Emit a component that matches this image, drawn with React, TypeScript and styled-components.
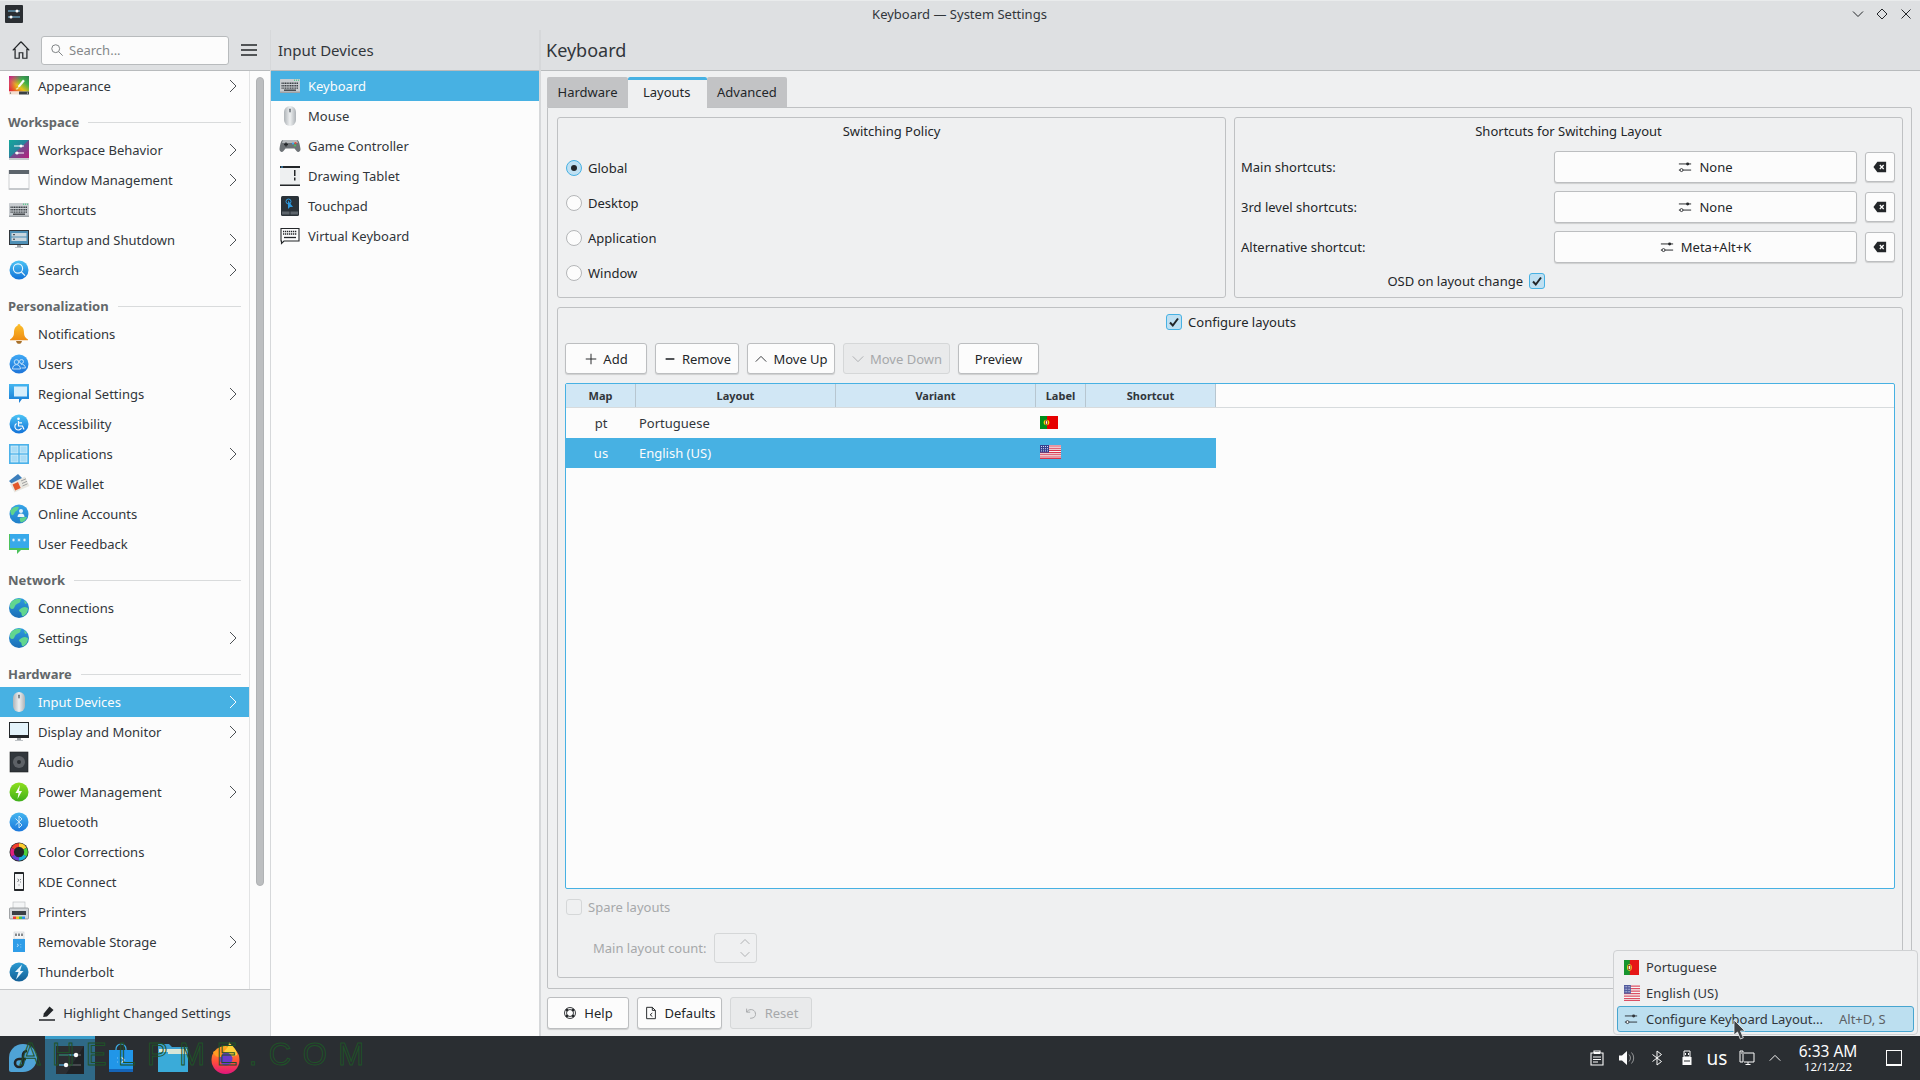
import React from "react";
import styled, { createGlobalStyle } from "styled-components";

const GlobalStyle = createGlobalStyle`
    html, body {
        margin: 0;
        padding: 0;
        background: #eff0f1;
    }
    body {
        font-family: "Noto Sans", "Open Sans", sans-serif;
        font-size: 13px;
        color: #232629;
    }
    * {
        box-sizing: border-box;
    }
`;

/* ---------- icons ---------- */

const Ico = ({ s = 22, children }: { s?: number; children: React.ReactNode }) => (
    <IconSvg width={s} height={s} viewBox="0 0 22 22">
        {children}
    </IconSvg>
);

const IconSvg = styled.svg`
    flex: none;
    display: block;
`;

const Appearance = () => (
    <Ico>
        <defs>
            <linearGradient id="app-g" x1="0" y1="1" x2="1" y2="0">
                <stop offset="0" stopColor="#e8102f" />
                <stop offset="0.4" stopColor="#e8c218" />
                <stop offset="0.7" stopColor="#3fb04a" />
                <stop offset="1" stopColor="#2f7f50" />
            </linearGradient>
            <linearGradient id="app-m" x1="0" y1="0" x2="1" y2="0.6">
                <stop offset="0" stopColor="#c8148c" stopOpacity="1" />
                <stop offset="0.55" stopColor="#d4148c" stopOpacity="0" />
            </linearGradient>
        </defs>
        <rect x="1" y="1" width="20" height="15.500" fill="url(#app-g)" />
        <rect x="1" y="1" width="20" height="15.500" fill="url(#app-m)" />
        <rect x="1" y="16.500" width="10" height="3" fill="#f4dfcf" />
        <rect x="11" y="16.500" width="10" height="3" fill="#3b4045" />
        <circle cx="2.500" cy="18" r="0.600" fill="#31363b" />
        <circle cx="19.500" cy="18" r="0.600" fill="#fcfcfc" />
        <path d="M15 4.500l1.800 1.400-4.800 5.800-2.200 1 .7-2.400z" fill="#fcfcfc" />
        <path d="M7.500 14l2.200-1.600 1 1-1.800 1.400z" fill="#f2f2a0" />
    </Ico>
);

const WorkspaceBehavior = () => (
    <Ico>
        <defs>
            <linearGradient id="wb-g" x1="0" y1="0" x2="1" y2="1">
                <stop offset="0" stopColor="#14a89a" />
                <stop offset="0.55" stopColor="#2a7f9e" />
                <stop offset="1" stopColor="#c21f7a" />
            </linearGradient>
        </defs>
        <rect x="1" y="1" width="20" height="18" fill="url(#wb-g)" />
        <path d="M1 19l20-18v18z" fill="#b02080" opacity="0.55" />
        <rect x="1" y="19" width="20" height="2" fill="#c6c9cc" />
        <path d="M6 7h10M7 14h9" stroke="#fcfcfc" strokeWidth="1" />
        <circle cx="13" cy="7" r="1.5" fill="#fcfcfc" />
        <circle cx="9" cy="14" r="1.5" fill="#fcfcfc" />
    </Ico>
);

const WindowManagement = () => (
    <Ico>
        <rect x="1" y="1.5" width="20" height="19" fill="#fcfcfc" stroke="#c3c6c9" strokeWidth="0.8" />
        <rect x="1" y="1" width="20" height="4" fill="#5d656c" />
        <rect x="1" y="19" width="20" height="2" fill="#c6c9cc" />
    </Ico>
);

const KeyboardColor = () => (
    <Ico>
        <rect x="1" y="4" width="20" height="14" rx="0.5" fill="#c8ccd0" />
        <rect x="1" y="16.5" width="20" height="1.5" fill="#9da2a6" />
        <path d="M2.5 8.3h17M2.5 10.7h17M2.5 13.1h17" stroke="#3b4045" strokeWidth="1.4" strokeDasharray="1.2 .5" />
        <path d="M5 15.2h12" stroke="#3b4045" strokeWidth="1.4" />
        <path d="M15 5.2h5" stroke="#2ecc71" strokeWidth="1" strokeDasharray="1 1" />
    </Ico>
);

const Startup = () => (
    <Ico>
        <rect x="1" y="1" width="20" height="15" fill="#31363b" />
        <rect x="2" y="2" width="18" height="13" fill="#4e8fb5" />
        <rect x="3.5" y="4" width="15" height="3.5" fill="#c9d6de" />
        <rect x="3.5" y="8.5" width="15" height="3.5" fill="#c9d6de" />
        <path d="M5 5.7h2M5 10.2h2" stroke="#31363b" strokeWidth="1" />
        <rect x="9" y="16" width="4" height="2" fill="#9da2a6" />
        <rect x="7" y="18" width="8" height="1" fill="#bfc3c6" />
    </Ico>
);

const BlueDisc = ({ id, from = "#4cc4f5", to = "#1272d8" }: { id: string; from?: string; to?: string }) => (
    <>
        <defs>
            <linearGradient id={id} x1="0" y1="0" x2="0" y2="1">
                <stop offset="0" stopColor={from} />
                <stop offset="1" stopColor={to} />
            </linearGradient>
        </defs>
        <circle cx="11" cy="11" r="9.5" fill={`url(#${id})`} />
    </>
);

const SearchColor = () => (
    <Ico>
        <BlueDisc id="sr-g" />
        <circle cx="10" cy="9.5" r="4.6" fill="none" stroke="#eaf6fd" strokeWidth="1.1" />
        <path d="M13.4 13l3.6 3.6" stroke="#eaf6fd" strokeWidth="1.2" />
    </Ico>
);

const Bell = () => (
    <Ico>
        <defs>
            <linearGradient id="bl-g" x1="0" y1="0" x2="0" y2="1">
                <stop offset="0" stopColor="#fbc02d" />
                <stop offset="1" stopColor="#ef8c13" />
            </linearGradient>
        </defs>
        <path d="M11 1c1 0 1.4.8 1.5 1.8C15.5 4 16 7 16 10c0 3 1.4 5 4 6.5v.8H2v-.8C4.600 15 6 13 6 10c0-3 .5-6 3.500-7.200C9.600 1.800 10 1 11 1z" fill="url(#bl-g)" />
        <path d="M8 18h6c-.5 2-1.500 2.800-3 2.800S8.500 20 8 18z" fill="#a8702a" />
    </Ico>
);

const Users = () => (
    <Ico>
        <BlueDisc id="us-g" from="#3fa9f5" to="#1d74d8" />
        <circle cx="8.500" cy="9" r="2.300" fill="none" stroke="#cfe8fb" strokeWidth="0.9" />
        <circle cx="13.500" cy="8.500" r="2" fill="none" stroke="#cfe8fb" strokeWidth="0.9" />
        <path d="M4.500 16c.3-3 1.800-4.300 4-4.300s3.700 1.300 4 4.300zM13 11.300c2.500-.3 4 1 4.500 3.700h-4" fill="none" stroke="#cfe8fb" strokeWidth="0.9" />
    </Ico>
);

const Regional = () => (
    <Ico>
        <defs>
            <linearGradient id="rg-g" x1="0" y1="0" x2="0" y2="1">
                <stop offset="0" stopColor="#45b6f0" />
                <stop offset="1" stopColor="#1478d4" />
            </linearGradient>
        </defs>
        <path d="M1 1h20v15h-7l-3 4v-4H1z" fill="url(#rg-g)" />
        <rect x="6" y="3.500" width="13" height="10" fill="#d8eefb" />
    </Ico>
);

const Accessibility = () => (
    <Ico>
        <BlueDisc id="ac-g" />
        <circle cx="10.500" cy="5.800" r="1.300" fill="#fcfcfc" />
        <path d="M10.500 8v5h4l1.500 3.500M10 9.800H14" fill="none" stroke="#fcfcfc" strokeWidth="1.200" />
        <path d="M8.500 10.500a3.500 3.500 0 1 0 5 4.500" fill="none" stroke="#fcfcfc" strokeWidth="1.100" />
    </Ico>
);

const Applications = () => (
    <Ico>
        <rect x="1" y="1" width="20" height="20" fill="#4cb2ea" />
        <rect x="3" y="3" width="7" height="7" fill="#a9dcf6" stroke="#e3f3fc" strokeWidth="0.6" />
        <rect x="12" y="3" width="7" height="7" fill="#a9dcf6" stroke="#e3f3fc" strokeWidth="0.6" />
        <rect x="3" y="12" width="7" height="7" fill="#a9dcf6" stroke="#e3f3fc" strokeWidth="0.6" />
        <rect x="12" y="12" width="7" height="7" fill="#a9dcf6" stroke="#e3f3fc" strokeWidth="0.6" />
    </Ico>
);

const Wallet = () => (
    <Ico>
        <path d="M1 8l9-7 5 5-9 7z" fill="#3c7fbc" />
        <path d="M2 11l15-7.500 4.500 9.500-15 6.500z" fill="#e9e7e0" />
        <rect x="5.500" y="10" width="6" height="6.500" fill="#e2592b" transform="rotate(-24 8.500 13)" />
        <path d="M13 8l5-2.200M14 10.500l5-2.200M14.500 13l5-2.200" stroke="#8a8d8f" strokeWidth="0.8" />
    </Ico>
);

const Online = () => (
    <Ico>
        <BlueDisc id="on-g" from="#37a5e8" to="#1f7fc9" />
        <path d="M3 7c2-3 5-4 8-3-1 2-1 3-3 4s-1 3-3 4-2-2-3-5zM12 15c2-1 5-1 7-1-1 3-3 5-6 5.500-1-1-1.500-3-1-4.500z" fill="#5fd38d" />
        <circle cx="13" cy="8" r="2" fill="#e8f5fc" />
        <path d="M9.500 14c0-2.500 1.500-3.500 3.500-3.500s3.500 1 3.500 3.500z" fill="#e8f5fc" />
    </Ico>
);

const Feedback = () => (
    <Ico>
        <path d="M1 1h20v16h-8l-4 4v-4H1z" fill="#4cc25c" />
        <rect x="2" y="1" width="19" height="14" fill="#38a9ea" />
        <path d="M4 7h3M5.500 5.500v3M9.500 7h3M11 5.500v3M15 7h3M16.500 5.500v3M4.500 5.800l2 2.400M6.500 5.800l-2 2.400M10 5.800l2 2.400M12 5.800l-2 2.400M15.500 5.800l2 2.400M17.500 5.800l-2 2.400" stroke="#fcfcfc" strokeWidth="0.6" />
    </Ico>
);

const Globe = () => (
    <Ico>
        <defs>
            <linearGradient id="gl-g" x1="0" y1="0" x2="0" y2="1">
                <stop offset="0" stopColor="#2e9ae0" />
                <stop offset="1" stopColor="#1a6fb5" />
            </linearGradient>
        </defs>
        <circle cx="11" cy="11" r="10" fill="url(#gl-g)" />
        <path d="M3 5c3-3 7-4 10-3-1 2 0 3-2 4S8 7 7 9s-1 3-3 3-3-3-1-7zM11 13c2-2 4-3 6-3l3 1c0 4-2 7-5 8.500-2-1-1-3-2-4s-2-1-2-2.500zM16 3l3 3-2 1z" fill="#61d68f" />
    </Ico>
);

const Mouse = () => (
    <Ico>
        <defs>
            <linearGradient id="ms-g" x1="0" y1="0" x2="1" y2="0">
                <stop offset="0" stopColor="#aeb3b7" />
                <stop offset="0.5" stopColor="#eef0f1" />
                <stop offset="1" stopColor="#aeb3b7" />
            </linearGradient>
        </defs>
        <rect x="5" y="1" width="12" height="20" rx="6" fill="url(#ms-g)" />
        <rect x="10.300" y="3.500" width="1.400" height="4" rx="0.700" fill="#5d656c" />
    </Ico>
);

const Display = () => (
    <Ico>
        <rect x="1" y="1" width="20" height="16" fill="#232629" />
        <rect x="2" y="2" width="18" height="12" fill="#e4f3fb" />
        <rect x="9" y="17" width="4" height="2" fill="#9da2a6" />
        <rect x="7" y="19" width="8" height="1" fill="#bfc3c6" />
    </Ico>
);

const Audio = () => (
    <Ico>
        <rect x="2" y="1" width="18" height="20" fill="#31363b" />
        <rect x="2" y="1" width="18" height="20" fill="none" stroke="#1b1e20" strokeWidth="0.6" />
        <circle cx="11" cy="11" r="6" fill="#5d6166" />
        <circle cx="11" cy="11" r="2" fill="#2a2e32" />
    </Ico>
);

const Power = () => (
    <Ico>
        <BlueDisc id="pw-g" from="#8fe01e" to="#3faf1b" />
        <path d="M12 4l-4.500 8h3l-1 6 4.500-8h-3z" fill="#fcfcfc" />
    </Ico>
);

const BluetoothColor = () => (
    <Ico>
        <BlueDisc id="bt-g" from="#45b6f0" to="#1b78dc" />
        <path d="M7.500 7.500l6.500 6.500-3 3V5l3 3-6.500 6" fill="none" stroke="#d8eefb" strokeWidth="0.9" />
    </Ico>
);

const ColorCorrections = () => (
    <Ico>
        <circle cx="11" cy="11" r="9.500" fill="#232629" />
        <g fill="none" strokeWidth="3.500">
            <path d="M11 4a7 7 0 0 1 6 3.500" stroke="#ffce2e" />
            <path d="M17 7.500a7 7 0 0 1 0 7" stroke="#4cd137" />
            <path d="M17 14.500a7 7 0 0 1-6 3.500" stroke="#1ab0d8" />
            <path d="M11 18a7 7 0 0 1-6-3.500" stroke="#6a3fd4" />
            <path d="M5 14.500a7 7 0 0 1 0-7" stroke="#e0207f" />
            <path d="M5 7.500a7 7 0 0 1 6-3.500" stroke="#f0402c" />
        </g>
        <circle cx="11" cy="11" r="1.500" fill="#232629" />
    </Ico>
);

const KdeConnect = () => (
    <Ico>
        <rect x="6" y="1" width="10" height="19" rx="0.800" fill="#232629" />
        <rect x="7" y="3" width="8" height="15" fill="#f4f5f6" />
        <path d="M9.500 8l1.500 1-1.500 2M12 8.500h1M12 11h1M11 13.500v1" stroke="#6e7377" strokeWidth="0.900" fill="none" />
    </Ico>
);

const Printer = () => (
    <Ico>
        <rect x="5" y="1" width="12" height="8" fill="#f4f5f6" stroke="#b5b9bc" strokeWidth="0.600" />
        <rect x="1.500" y="7" width="19" height="11" rx="0.800" fill="#d3d6d9" stroke="#6e7377" strokeWidth="0.600" />
        <rect x="4" y="10" width="14" height="4" fill="#3b4045" />
        <rect x="5" y="15.500" width="3" height="2.500" fill="#e93a3a" />
        <rect x="8" y="15.500" width="3" height="2.500" fill="#f2c31c" />
        <rect x="11" y="15.500" width="3" height="2.500" fill="#3fc04a" />
        <rect x="14" y="15.500" width="3" height="2.500" fill="#2a8fe8" />
    </Ico>
);

const Usb = () => (
    <Ico>
        <rect x="6" y="1" width="10" height="7" fill="#f4f5f6" stroke="#c3c6c9" strokeWidth="0.500" />
        <path d="M8 2.500v2.500M11 2.500v2.500M14 2.500v2.500" stroke="#3b4045" strokeWidth="1.200" />
        <rect x="5" y="8" width="12" height="13" fill="#2f9de8" />
        <path d="M9 13l1.500 1-1.500 2M12.500 13.500h.7M12.500 16h.7" stroke="#cfe8fb" strokeWidth="0.800" fill="none" />
    </Ico>
);

const ThunderboltColor = () => (
    <Ico>
        <BlueDisc id="tb-g" from="#2b9ad2" to="#125f96" />
        <path d="M14 3.500L7 11h3.500L8 18.500l7.500-8.500H12z" fill="#eaf6fd" />
    </Ico>
);

const Gamepad = () => (
    <Ico>
        <path d="M4 5h14c2 0 3 5 3.500 9 .2 2.500-2.500 4-4 2l-2-2.500h-9l-2 2.500c-1.500 2-4.200.5-4-2C1 10 2 5 4 5z" fill="#6e7377" />
        <path d="M4 5h14l1 3H3z" fill="#b5b9bc" />
        <path d="M5 9.500h4M7 7.500v4" stroke="#232629" strokeWidth="1.400" />
        <circle cx="14" cy="8.500" r="1.100" fill="#3fa9f5" />
        <circle cx="16.500" cy="8" r="1.100" fill="#e74c3c" />
        <circle cx="16" cy="10.500" r="1.100" fill="#4cc25c" />
    </Ico>
);

const Tablet = () => (
    <Ico>
        <rect x="1" y="2" width="20" height="18" fill="#eef0f1" />
        <rect x="1" y="1" width="20" height="2" fill="#232629" />
        <rect x="1" y="19.500" width="20" height="1.500" fill="#232629" />
        <rect x="2" y="1.500" width="2" height="1" fill="#3fa9f5" />
        <rect x="15" y="5" width="1.500" height="6" fill="#232629" />
        <rect x="15" y="12.500" width="1.500" height="3" fill="#232629" />
    </Ico>
);

const Touchpad = () => (
    <Ico>
        <rect x="2" y="1" width="18" height="20" rx="1.500" fill="#2a3238" />
        <rect x="3" y="16.500" width="7.500" height="3" fill="#5d656c" />
        <rect x="11.500" y="16.500" width="7.500" height="3" fill="#5d656c" />
        <circle cx="9.500" cy="6.500" r="2.500" fill="none" stroke="#2e9ae0" strokeWidth="1" />
        <path d="M9 5.500v8.500l2-2h3z" fill="#2e9ae0" />
    </Ico>
);

const VirtualKeyboard = () => (
    <Ico>
        <path d="M2 3.500h18v12.500H5l-2.500 2.500V16H2z" fill="#fcfcfc" stroke="#232629" strokeWidth="1.100" />
        <path d="M4 6.500h14M4 9h14" stroke="#232629" strokeWidth="1.300" strokeDasharray="1.300 .7" />
        <path d="M5 12.500h12" stroke="#232629" strokeWidth="1.300" />
    </Ico>
);

const navIcons: Record<string, React.FC> = {
    Appearance,
    "Workspace Behavior": WorkspaceBehavior,
    "Window Management": WindowManagement,
    Shortcuts: KeyboardColor,
    "Startup and Shutdown": Startup,
    Search: SearchColor,
    Notifications: Bell,
    Users,
    "Regional Settings": Regional,
    Accessibility,
    Applications,
    "KDE Wallet": Wallet,
    "Online Accounts": Online,
    "User Feedback": Feedback,
    Connections: Globe,
    Settings: Globe,
    "Input Devices": Mouse,
    "Display and Monitor": Display,
    Audio,
    "Power Management": Power,
    Bluetooth: BluetoothColor,
    "Color Corrections": ColorCorrections,
    "KDE Connect": KdeConnect,
    Printers: Printer,
    "Removable Storage": Usb,
    Thunderbolt: ThunderboltColor,
};

const Mono = ({ s = 16, children, c = "#232629" }: { s?: number; children: React.ReactNode; c?: string }) => (
    <IconSvg width={s} height={s} viewBox="0 0 16 16" fill="none" stroke={c} color={c}>
        {children}
    </IconSvg>
);

const SlidersIcon = ({ c = "#232629", s = 14 }: { c?: string; s?: number }) => (
    <Mono c={c} s={s}>
        <path d="M1 4.500h14M1 11.500h14" strokeWidth="1.100" />
        <circle cx="11" cy="4.500" r="1.700" fill={c} stroke="none" />
        <circle cx="4" cy="11.500" r="1.700" fill="#fcfcfc" strokeWidth="1" />
    </Mono>
);

const ClearIcon = () => (
    <Mono s={14}>
        <path d="M5 2h10v12H5L0.500 8z" fill="#232629" stroke="none" />
        <path d="M7.800 5.800l4.400 4.400M12.200 5.800l-4.400 4.400" stroke="#fcfcfc" strokeWidth="1.500" />
    </Mono>
);

const CheckMark = () => (
    <IconSvg width={12} height={12} viewBox="0 0 12 12">
        <path d="M2 6.500l2.800 3L10 2.500" fill="none" stroke="#232629" strokeWidth="2" />
    </IconSvg>
);

const PtFlag = ({ w, h, soft }: { w: number; h: number; soft?: boolean }) => (
    <IconSvg width={w} height={h} viewBox="0 0 18 13" preserveAspectRatio="none" opacity={soft ? 0.9 : 1}>
        <rect width="18" height="13" fill="#e60000" />
        <rect width="7" height="13" fill="#008c1a" />
        <circle cx="6.500" cy="6.500" r="2.800" fill="#f5d90a" />
        <rect x="5.500" y="4.800" width="2" height="3.400" fill="#fcfcfc" stroke="#7a1a10" strokeWidth="0.700" />
    </IconSvg>
);

const UsFlag = ({ w, h, soft }: { w: number; h: number; soft?: boolean }) => (
    <IconSvg width={w} height={h} viewBox="0 0 21 14" preserveAspectRatio="none" opacity={soft ? 0.85 : 1}>
        <rect width="21" height="14" fill="#f8f8f8" />
        <path d="M0 1h21M0 3.200h21M0 5.400h21M0 7.600h21M0 9.800h21M0 12h21M0 13.600h21" stroke="#d8344c" strokeWidth="1.100" />
        <rect width="9" height="7.600" fill="#35408f" />
        <path d="M1 1.500h7M1 3.700h7M1 5.900h7" stroke="#d4d8ee" strokeWidth="1" strokeDasharray="1 1" />
    </IconSvg>
);

/* ---------- window frame ---------- */

const Screen = styled.div`
    position: relative;
    width: 1920px;
    height: 1080px;
    overflow: hidden;
    display: flex;
    flex-direction: column;
`;

const Win = styled.div`
    flex: 1;
    min-height: 0;
    display: flex;
    flex-direction: column;
    background: #eff0f1;
`;

const TitleBar = styled.div`
    height: 30px;
    flex: none;
    display: grid;
    grid-template-columns: 1fr auto 1fr;
    align-items: center;
    padding: 0 6px 3px 5px;
    background: #dee0e2;
    border-top: 1px solid #e9ebec;
    font-size: 13px;
    color: #31363b;
`;

const TitleText = styled.div`
    text-align: center;
`;

const WinButtons = styled.div`
    justify-self: end;
    display: flex;
    gap: 8px;
`;

const Columns = styled.div`
    flex: 1;
    min-height: 0;
    display: flex;
`;

const Column = styled.div<{ $width: number; $line?: number }>`
    flex: none;
    width: ${({ $width }) => $width}px;
    display: flex;
    flex-direction: column;
    background: #fcfcfc;
    border-right: ${({ $line }) => $line ?? 1}px solid #d6d8da;
`;

const Header = styled.div`
    flex: none;
    height: 41px;
    display: flex;
    align-items: center;
    background: #dee0e2;
    border-bottom: 1px solid #b8bbbd;
`;

const SideHeader = styled(Header)`
    padding-left: 10px;
    gap: 9px;
`;

const SearchBox = styled.div`
    width: 188px;
    height: 29px;
    display: flex;
    align-items: center;
    gap: 5px;
    padding-left: 8px;
    background: #fcfcfc;
    border: 1px solid #b8bbbd;
    border-radius: 3px;
    color: #85888a;
`;

const MenuButton = styled.div`
    margin-left: 3px;
    display: flex;
`;

const HeaderTitle = styled.div<{ $size: number }>`
    padding-left: ${({ $size }) => ($size > 16 ? 5 : 7)}px;
    font-size: ${({ $size }) => $size}px;
    color: #31363b;
`;

/* ---------- sidebar ---------- */

const SideBody = styled.div`
    flex: 1;
    min-height: 0;
    display: flex;
`;

const NavList = styled.div`
    width: 250px;
    flex: none;
    border-right: 1px solid #e2e3e4;
`;

const ScrollTrack = styled.div`
    flex: 1;
    padding: 6px 6px 0;
`;

const ScrollThumb = styled.div`
    width: 8px;
    height: 809px;
    background: #bcbec0;
    border: 1px solid #b0b2b4;
    border-radius: 4px;
`;

const SectionTitle = styled.div`
    height: 34px;
    padding: 8px 8px 0 8px;
    display: flex;
    align-items: center;
    gap: 9px;
    font-weight: 700;
    color: #63676a;
    &::after {
        content: "";
        flex: 1;
        height: 1px;
        background: #d9dbdc;
    }
`;

const Row = styled.div<{ $active?: boolean }>`
    height: 30px;
    display: flex;
    align-items: center;
    gap: 8px;
    padding: 0 12px 0 8px;
    background: ${({ $active }) => ($active ? "#47b1e3" : "transparent")};
    color: ${({ $active }) => ($active ? "#fcfcfc" : "#31363b")};
`;

const RowLabel = styled.span`
    flex: 1;
`;

const SideFooter = styled.div`
    flex: none;
    height: 47px;
    display: flex;
    align-items: center;
    justify-content: center;
    gap: 8px;
    background: #eff0f1;
    border-top: 1px solid #c6c8ca;
    color: #31363b;
`;

const SubRow = styled(Row)`
    gap: 7px;
`;

/* ---------- main column ---------- */

const Main = styled.div`
    flex: 1;
    min-width: 0;
    display: flex;
    flex-direction: column;
`;

const MainBody = styled.div`
    flex: 1;
    min-height: 0;
    display: flex;
    flex-direction: column;
    padding: 6px 8px 0 6px;
`;

const TabBar = styled.div`
    flex: none;
    height: 30px;
    display: flex;
    position: relative;
    z-index: 1;
`;

const Tab = styled.div<{ $active?: boolean }>`
    display: flex;
    align-items: center;
    margin-bottom: ${({ $active }) => ($active ? -1 : 0)}px;
    padding: ${({ $active }) => ($active ? "0 16px 5px 15px" : "0 10.500px")};
    background: ${({ $active }) => ($active ? "#eff0f1" : "#c2c3c5")};
    border-top: ${({ $active }) => ($active ? "3px solid #47b1e3" : "none")};
    border-radius: 2px 2px 0 0;
`;

const Pane = styled.div`
    flex: 1;
    min-height: 0;
    display: flex;
    flex-direction: column;
    gap: 9px;
    padding: 9px 8px 10px 9px;
    border: 1px solid #bfc1c3;
    border-radius: 0 2px 2px 2px;
`;

const TopGroups = styled.div`
    flex: none;
    display: grid;
    grid-template-columns: 1fr 1fr;
    gap: 8px;
    height: 181px;
`;

const Group = styled.div`
    border: 1px solid #bfc1c3;
    border-radius: 3px;
    padding-top: 3px;
    display: flex;
    flex-direction: column;
    min-height: 0;
`;

const GroupTitle = styled.div`
    height: 20px;
    line-height: 20px;
    text-align: center;
`;

const RadioList = styled.div`
    margin-top: 9px;
    padding-left: 8px;
`;

const RadioRow = styled.div`
    height: 35px;
    display: flex;
    align-items: center;
    gap: 6px;
`;

const Radio = styled.span<{ $on?: boolean }>`
    width: 16px;
    height: 16px;
    border-radius: 50%;
    display: flex;
    align-items: center;
    justify-content: center;
    border: 1px solid ${({ $on }) => ($on ? "#47b1e3" : "#b4b6b8")};
    background: ${({ $on }) => ($on ? "#bfe0f2" : "#fcfcfc")};
    &::after {
        content: "";
        display: ${({ $on }) => ($on ? "block" : "none")};
        width: 6px;
        height: 6px;
        border-radius: 50%;
        background: #232629;
    }
`;

const ShortcutGrid = styled.div`
    margin-top: 10px;
    padding: 0 7px 0 6px;
    display: grid;
    grid-template-columns: 1fr 303px 30px;
    grid-auto-rows: 32px;
    gap: 8px;
    align-items: center;
`;

const Button = styled.div<{ $disabled?: boolean }>`
    height: 32px;
    display: flex;
    align-items: center;
    justify-content: center;
    gap: 7px;
    padding: 0 12px;
    background: ${({ $disabled }) => ($disabled ? "#e9eaeb" : "#fcfcfc")};
    color: ${({ $disabled }) => ($disabled ? "#a6a8aa" : "#232629")};
    border: 1px solid ${({ $disabled }) => ($disabled ? "#d5d7d8" : "#bcbec0")};
    border-radius: 3px;
    box-shadow: ${({ $disabled }) => ($disabled ? "none" : "0 1px 1px rgba(0, 0, 0, 0.14)")};
`;

const ClearButton = styled(Button)`
    height: 30px;
    padding: 0;
`;

const OsdRow = styled.div`
    grid-column: 1;
    justify-self: end;
    align-self: start;
    height: 19px;
    margin-right: 1px;
    display: flex;
    align-items: center;
    gap: 6px;
`;

const Checkbox = styled.span<{ $on?: boolean; $disabled?: boolean }>`
    width: 16px;
    height: 16px;
    flex: none;
    display: flex;
    align-items: center;
    justify-content: center;
    border-radius: 3px;
    border: 1px solid ${({ $on, $disabled }) => ($on ? "#47b1e3" : $disabled ? "#d5d7d8" : "#b4b6b8")};
    background: ${({ $on, $disabled }) => ($on ? "#bfe0f2" : $disabled ? "#eff0f1" : "#fcfcfc")};
`;

const LayoutsGroup = styled(Group)`
    flex: 1;
    padding: 4px 7px 14px 7px;
`;

const ConfigureRow = styled.div`
    height: 20px;
    display: flex;
    align-items: center;
    justify-content: center;
    gap: 6px;
    padding-left: 2px;
`;

const ButtonBar = styled.div`
    margin-top: 11px;
    display: flex;
    gap: 8px;
`;

const ToolButton = styled(Button)<{ $width: number }>`
    width: ${({ $width }) => $width}px;
    height: 31px;
    padding: 0;
    gap: 5px;
`;

const Table = styled.div`
    flex: 1;
    min-height: 0;
    margin-top: 9px;
    background: #fcfcfc;
    border: 1px solid #47b1e3;
    border-radius: 2px;
`;

const cols = "70px 200px 200px 50px 130px";

const TableHead = styled.div`
    height: 24px;
    display: grid;
    grid-template-columns: ${cols};
    border-bottom: 1px solid #d7dbdd;
`;

const HeadCell = styled.div`
    display: flex;
    align-items: center;
    justify-content: center;
    background: #d1e7f5;
    border-right: 1px solid #b7c6d0;
    font-size: 11px;
    font-weight: 700;
    color: #31363b;
`;

const TableRow = styled.div<{ $active?: boolean }>`
    width: 650px;
    height: 30px;
    display: grid;
    grid-template-columns: ${cols};
    align-items: center;
    background: ${({ $active }) => ($active ? "#47b1e3" : "transparent")};
    color: ${({ $active }) => ($active ? "#fcfcfc" : "#31363b")};
`;

const MapCell = styled.div`
    text-align: center;
`;

const LayoutCell = styled.div`
    padding-left: 3px;
`;

const FlagCell = styled.div`
    padding-left: 4px;
    display: flex;
    margin-top: -2px;
`;

const SpareRow = styled.div`
    margin-top: 8px;
    margin-left: 1px;
    height: 20px;
    display: flex;
    align-items: center;
    gap: 6px;
    color: #a6a8aa;
`;

const CountRow = styled.div`
    margin-top: 16px;
    margin-left: 28px;
    height: 30px;
    display: flex;
    align-items: center;
    gap: 8px;
    color: #a6a8aa;
`;

const SpinBox = styled.div`
    width: 43px;
    height: 30px;
    padding-right: 6px;
    display: flex;
    flex-direction: column;
    align-items: flex-end;
    justify-content: center;
    gap: 2px;
    border: 1px solid #d5d7d8;
    border-radius: 3px;
`;

const Footer = styled.div`
    flex: none;
    height: 47px;
    padding-top: 8px;
    display: flex;
    gap: 8px;
`;

const FooterButton = styled(Button)<{ $width: number }>`
    width: ${({ $width }) => $width}px;
    padding: 0;
`;

/* ---------- panel ---------- */

const Panel = styled.div`
    position: relative;
    flex: none;
    height: 44px;
    display: flex;
    align-items: center;
    background: #2a2e32;
    color: #fcfcfc;
`;

const Launcher = styled.div`
    width: 45px;
    height: 44px;
    display: flex;
    align-items: center;
    justify-content: center;
`;

const Task = styled.div<{ $active?: boolean; $w?: number }>`
    width: ${({ $w }) => $w ?? 52}px;
    height: 44px;
    display: flex;
    align-items: center;
    justify-content: center;
    background: ${({ $active }) => ($active ? "#2f6987" : "transparent")};
    border-top: ${({ $active }) => ($active ? "3px solid #3b9dc9" : "none")};
`;

const Watermark = styled.div`
    position: absolute;
    left: 20px;
    top: 1px;
    font-family: "Liberation Sans", sans-serif;
    font-size: 31px;
    letter-spacing: 11.5px;
    white-space: nowrap;
    color: transparent;
    -webkit-text-stroke: 1px #1f5228;
    pointer-events: none;
`;

const Tray = styled.div`
    margin-left: auto;
    display: flex;
    align-items: center;
`;

const TraySlot = styled.div<{ $w?: number }>`
    width: ${({ $w }) => $w ?? 30}px;
    display: flex;
    justify-content: center;
`;

const TrayLang = styled(TraySlot)`
    font-size: 19px;
    line-height: 22px;
`;

const Clock = styled.div`
    width: 70px;
    margin-left: 5px;
    display: flex;
    flex-direction: column;
    align-items: center;
    line-height: 14px;
`;

const ClockTime = styled.div`
    font-size: 15.5px;
    line-height: 17px;
`;

const ClockDate = styled.div`
    font-size: 11.5px;
    line-height: 13px;
`;

const ShowDesktop = styled.div`
    width: 16px;
    height: 16px;
    margin: 0 18px 0 23px;
    border: 1px solid #fcfcfc;
    border-bottom-width: 2px;
`;

/* ---------- popup menu ---------- */

const Popup = styled.div`
    position: absolute;
    right: 2px;
    bottom: 45px;
    width: 305px;
    height: 85px;
    padding: 3px 3px;
    background: #eff0f1;
    border: 1px solid #cfd1d3;
    border-radius: 4px;
    display: flex;
    flex-direction: column;
    color: #31363b;
`;

const PopupItem = styled.div<{ $active?: boolean }>`
    height: 26px;
    flex: none;
    display: grid;
    grid-template-columns: 17px auto 1fr;
    align-items: center;
    column-gap: 5px;
    padding-left: 6px;
    border-radius: 3px;
    border: 1px solid ${({ $active }) => ($active ? "#47a5d0" : "transparent")};
    background: ${({ $active }) => ($active ? "#bcdff0" : "transparent")};
`;

const PopupShortcut = styled.span`
    margin-left: 11px;
    color: #5d6165;
`;

const Cursor = styled.svg`
    position: absolute;
    left: 1733px;
    top: 1019px;
`;

const sections: { title?: string; items: [string, boolean?][] }[] = [
    { items: [["Appearance", true]] },
    {
        title: "Workspace",
        items: [
            ["Workspace Behavior", true],
            ["Window Management", true],
            ["Shortcuts"],
            ["Startup and Shutdown", true],
            ["Search", true],
        ],
    },
    {
        title: "Personalization",
        items: [
            ["Notifications"],
            ["Users"],
            ["Regional Settings", true],
            ["Accessibility"],
            ["Applications", true],
            ["KDE Wallet"],
            ["Online Accounts"],
            ["User Feedback"],
        ],
    },
    { title: "Network", items: [["Connections"], ["Settings", true]] },
    {
        title: "Hardware",
        items: [
            ["Input Devices", true],
            ["Display and Monitor", true],
            ["Audio"],
            ["Power Management", true],
            ["Bluetooth"],
            ["Color Corrections"],
            ["KDE Connect"],
            ["Printers"],
            ["Removable Storage", true],
            ["Thunderbolt"],
        ],
    },
];

const subItems: [string, React.FC][] = [
    ["Keyboard", KeyboardColor],
    ["Mouse", Mouse],
    ["Game Controller", Gamepad],
    ["Drawing Tablet", Tablet],
    ["Touchpad", Touchpad],
    ["Virtual Keyboard", VirtualKeyboard],
];

const NavChevron = ({ light }: { light?: boolean }) => (
    <IconSvg width={8} height={14} viewBox="0 0 8 14">
        <path d="M1 1l6 6-6 6" fill="none" stroke={light ? "#fcfcfc" : "#4d5155"} strokeWidth="1" />
    </IconSvg>
);

const shortcuts = [
    ["Main shortcuts:", "None"],
    ["3rd level shortcuts:", "None"],
    ["Alternative shortcut:", "Meta+Alt+K"],
];

export default function App() {
    return (
        <Screen>
            <GlobalStyle />
            <Win>
                <TitleBar>
                    <IconSvg width={18} height={18} viewBox="0 0 18 18">
                        <rect width="18" height="18" rx="1" fill="#2a2e32" />
                        <path d="M3 6h12M3 12h12" stroke="#7fc7ee" strokeWidth="1" />
                        <circle cx="12" cy="6" r="1.500" fill="#fcfcfc" />
                        <circle cx="6" cy="12" r="1.500" fill="#fcfcfc" />
                    </IconSvg>
                    <TitleText>Keyboard — System Settings</TitleText>
                    <WinButtons>
                        <Mono>
                            <path d="M3 5.500l5 5 5-5" strokeWidth="1" />
                        </Mono>
                        <Mono>
                            <path d="M8 3l5 5-5 5-5-5z" strokeWidth="1" />
                        </Mono>
                        <Mono>
                            <path d="M3.500 3.500l9 9M12.500 3.500l-9 9" strokeWidth="1" />
                        </Mono>
                    </WinButtons>
                </TitleBar>
                <Columns>
                    <Column $width={271}>
                        <SideHeader>
                            <Mono s={22}>
                                <path d="M8 2L2 8.300M8 2l6 6.300M3.700 7v7h3V10h2.600v4h3V7" strokeWidth="0.900" />
                            </Mono>
                            <SearchBox>
                                <Mono s={14} c="#6e7275">
                                    <circle cx="6.500" cy="6.500" r="4.500" strokeWidth="1" />
                                    <path d="M10 10l4.500 4.500" strokeWidth="1" />
                                </Mono>
                                Search...
                            </SearchBox>
                            <MenuButton>
                                <Mono s={16}>
                                    <path d="M0 3h16M0 8h16M0 13h16" strokeWidth="1.500" />
                                </Mono>
                            </MenuButton>
                        </SideHeader>
                        <SideBody>
                            <NavList>
                                {sections.map((section) => (
                                    <React.Fragment key={section.title ?? "top"}>
                                        {section.title && <SectionTitle>{section.title}</SectionTitle>}
                                        {section.items.map(([label, more]) => {
                                            const Icon = navIcons[label];
                                            const active = label === "Input Devices";
                                            return (
                                                <Row key={label} $active={active}>
                                                    <Icon />
                                                    <RowLabel>{label}</RowLabel>
                                                    {more && <NavChevron light={active} />}
                                                </Row>
                                            );
                                        })}
                                    </React.Fragment>
                                ))}
                            </NavList>
                            <ScrollTrack>
                                <ScrollThumb />
                            </ScrollTrack>
                        </SideBody>
                        <SideFooter>
                            <Mono>
                                <path d="M10.500 1.500l4 3.500-6.500 6.500-3.800.6.600-3.600z" fill="#232629" stroke="none" />
                                <path d="M0 15h16" strokeWidth="1.500" />
                            </Mono>
                            Highlight Changed Settings
                        </SideFooter>
                    </Column>
                    <Column $width={270} $line={2}>
                        <Header>
                            <HeaderTitle $size={15}>Input Devices</HeaderTitle>
                        </Header>
                        {subItems.map(([label, Icon]) => (
                            <SubRow key={label} $active={label === "Keyboard"}>
                                <Icon />
                                <RowLabel>{label}</RowLabel>
                            </SubRow>
                        ))}
                    </Column>
                    <Main>
                        <Header>
                            <HeaderTitle $size={18}>Keyboard</HeaderTitle>
                        </Header>
                        <MainBody>
                            <TabBar>
                                <Tab>Hardware</Tab>
                                <Tab $active>Layouts</Tab>
                                <Tab>Advanced</Tab>
                            </TabBar>
                            <Pane>
                                <TopGroups>
                                    <Group>
                                        <GroupTitle>Switching Policy</GroupTitle>
                                        <RadioList>
                                            {["Global", "Desktop", "Application", "Window"].map((label, i) => (
                                                <RadioRow key={label}>
                                                    <Radio $on={i === 0} />
                                                    {label}
                                                </RadioRow>
                                            ))}
                                        </RadioList>
                                    </Group>
                                    <Group>
                                        <GroupTitle>Shortcuts for Switching Layout</GroupTitle>
                                        <ShortcutGrid>
                                            {shortcuts.map(([label, value]) => (
                                                <React.Fragment key={label}>
                                                    <div>{label}</div>
                                                    <Button>
                                                        <SlidersIcon />
                                                        {value}
                                                    </Button>
                                                    <ClearButton>
                                                        <ClearIcon />
                                                    </ClearButton>
                                                </React.Fragment>
                                            ))}
                                            <OsdRow>
                                                OSD on layout change
                                                <Checkbox $on>
                                                    <CheckMark />
                                                </Checkbox>
                                            </OsdRow>
                                        </ShortcutGrid>
                                    </Group>
                                </TopGroups>
                                <LayoutsGroup>
                                    <ConfigureRow>
                                        <Checkbox $on>
                                            <CheckMark />
                                        </Checkbox>
                                        Configure layouts
                                    </ConfigureRow>
                                    <ButtonBar>
                                        <ToolButton $width={82}>
                                            <Mono s={14}>
                                                <path d="M8 2v12M2 8h12" strokeWidth="1.100" />
                                            </Mono>
                                            Add
                                        </ToolButton>
                                        <ToolButton $width={84}>
                                            <Mono s={14}>
                                                <path d="M3 8h10" strokeWidth="1.800" />
                                            </Mono>
                                            Remove
                                        </ToolButton>
                                        <ToolButton $width={88}>
                                            <Mono s={14}>
                                                <path d="M2 11l6-6 6 6" strokeWidth="1" />
                                            </Mono>
                                            Move Up
                                        </ToolButton>
                                        <ToolButton $width={107} $disabled>
                                            <Mono s={14} c="#a6a8aa">
                                                <path d="M2 5l6 6 6-6" strokeWidth="1" />
                                            </Mono>
                                            Move Down
                                        </ToolButton>
                                        <ToolButton $width={81}>Preview</ToolButton>
                                    </ButtonBar>
                                    <Table>
                                        <TableHead>
                                            {["Map", "Layout", "Variant", "Label", "Shortcut"].map((h) => (
                                                <HeadCell key={h}>{h}</HeadCell>
                                            ))}
                                        </TableHead>
                                        <TableRow>
                                            <MapCell>pt</MapCell>
                                            <LayoutCell>Portuguese</LayoutCell>
                                            <div />
                                            <FlagCell>
                                                <PtFlag w={18} h={13} />
                                            </FlagCell>
                                        </TableRow>
                                        <TableRow $active>
                                            <MapCell>us</MapCell>
                                            <LayoutCell>English (US)</LayoutCell>
                                            <div />
                                            <FlagCell>
                                                <UsFlag w={21} h={14} />
                                            </FlagCell>
                                        </TableRow>
                                    </Table>
                                    <SpareRow>
                                        <Checkbox $disabled />
                                        Spare layouts
                                    </SpareRow>
                                    <CountRow>
                                        Main layout count:
                                        <SpinBox>
                                            <Mono s={10} c="#a6a8aa">
                                                <path d="M1 11l7-7 7 7" strokeWidth="1.400" />
                                            </Mono>
                                            <Mono s={10} c="#a6a8aa">
                                                <path d="M1 5l7 7 7-7" strokeWidth="1.400" />
                                            </Mono>
                                        </SpinBox>
                                    </CountRow>
                                </LayoutsGroup>
                            </Pane>
                            <Footer>
                                <FooterButton $width={82}>
                                    <Mono s={14}>
                                        <circle cx="8" cy="8" r="4" strokeWidth="1" />
                                        <circle cx="8" cy="8" r="6.300" strokeWidth="1" />
                                        <path d="M3.500 3.500l2 2M12.500 3.500l-2 2M3.500 12.500l2-2M12.500 12.500l-2-2" strokeWidth="3" />
                                    </Mono>
                                    Help
                                </FooterButton>
                                <FooterButton $width={85}>
                                    <Mono s={14}>
                                        <path d="M3 1.500h6.500L13 5v9.500H3zM9.500 1.500V5H13" strokeWidth="1.100" />
                                        <path d="M9.500 8L7 10l2.500 2" strokeWidth="1.100" />
                                    </Mono>
                                    Defaults
                                </FooterButton>
                                <FooterButton $width={82} $disabled>
                                    <Mono s={14} c="#a6a8aa">
                                        <path d="M3 3v4h4" strokeWidth="1.100" />
                                        <path d="M3 7c2-4 9-4 10 1s-3 6-6 6" strokeWidth="1.100" />
                                    </Mono>
                                    Reset
                                </FooterButton>
                            </Footer>
                        </MainBody>
                    </Main>
                </Columns>
            </Win>
            <Panel>
                <Launcher>
                    <IconSvg width={30} height={30} viewBox="0 0 30 30">
                        <path d="M15 1a14 14 0 0 1 0 28H3a2 2 0 0 1-2-2V15A14 14 0 0 1 15 1z" fill="#4fa3d6" />
                        <path d="M15 12v8a4 4 0 1 1-4-4h7M15 12a4 4 0 0 1 4-4" fill="none" stroke="#232629" strokeWidth="2.600" />
                    </IconSvg>
                </Launcher>
                <Task $active $w={50}>
                    <IconSvg width={28} height={28} viewBox="0 0 28 28">
                        <rect width="28" height="28" fill="#2b2e32" />
                        <path d="M28 0v28H10z" fill="#1f2226" />
                        <path d="M3 9h22M3 19h22" stroke="#6c7075" strokeWidth="1.200" />
                        <path d="M3 9h17M3 19h7" stroke="#3daee9" strokeWidth="1.200" />
                        <circle cx="20" cy="9" r="2.200" fill="#fcfcfc" />
                        <circle cx="10" cy="19" r="2.200" fill="#fcfcfc" />
                    </IconSvg>
                </Task>
                <Task $w={52}>
                    <IconSvg width={26} height={30} viewBox="0 0 26 30">
                        <path d="M8 9V6a5 5 0 0 1 10 0v3" fill="none" stroke="#3daee9" strokeWidth="1.200" />
                        <rect x="1" y="7" width="24" height="22" fill="#2196e8" />
                        <rect x="1" y="26" width="24" height="3" fill="#1565b8" />
                        <path d="M13 14l3.500 3-3.500 3M9 15h.5M9 19h.5" fill="none" stroke="#d8eefb" strokeWidth="1.200" />
                    </IconSvg>
                </Task>
                <Task $w={52}>
                    <IconSvg width={30} height={28} viewBox="0 0 30 28">
                        <path d="M0 0h11l3 3h16v25H0z" fill="#3c9fd0" />
                        <rect x="1" y="5" width="28" height="5" fill="#d8e6d8" />
                        <path d="M0 8l10-0 0 2h20v18H0z" fill="#3aabd9" />
                    </IconSvg>
                </Task>
                <Task $w={52}>
                    <IconSvg width={31} height={32} viewBox="0 0 31 32">
                        <defs>
                            <linearGradient id="ff-g" x1="0.500" y1="0" x2="0.500" y2="1">
                                <stop offset="0" stopColor="#ffb01f" />
                                <stop offset="0.55" stopColor="#ff4f3a" />
                                <stop offset="1" stopColor="#e0157e" />
                            </linearGradient>
                        </defs>
                        <circle cx="15.500" cy="18" r="14" fill="url(#ff-g)" />
                        <path d="M19 0c3 4 8 7 8 13l-9 3-4-7c3-2 5-5 5-9z" fill="#ffd23a" />
                        <circle cx="16" cy="17" r="6.500" fill="#6a3cc8" />
                        <path d="M3 10c3-2 7-2 10 0l-2 5c-3 0-6 0-8-5z" fill="#ff9d22" />
                    </IconSvg>
                </Task>
                <Watermark>AHELPME.COM</Watermark>
                <Tray>
                    <TraySlot>
                        <Mono c="#fcfcfc">
                            <path d="M2 3h12v12H2zM5 3V1h6v2" fill="none" strokeWidth="1.100" />
                            <path d="M5 2h6v2H5z" fill="#fcfcfc" stroke="none" />
                            <path d="M4 7h8M4 9.500h8M4 12h5" strokeWidth="1" />
                        </Mono>
                    </TraySlot>
                    <TraySlot>
                        <Mono c="#fcfcfc">
                            <path d="M0 5.500h3L8 1v14l-5-4.500H0z" fill="#fcfcfc" stroke="none" />
                            <path d="M10 4.500a5 5 0 0 1 0 7M12.500 2.500a8 8 0 0 1 0 11" strokeWidth="1" opacity="0.500" />
                        </Mono>
                    </TraySlot>
                    <TraySlot>
                        <Mono c="#fcfcfc">
                            <path d="M3.500 4.500l9 7L8 15V1l4.500 3.500-9 7" strokeWidth="1" />
                        </Mono>
                    </TraySlot>
                    <TraySlot>
                        <Mono c="#fcfcfc">
                            <path d="M5 1h6v6H5z" strokeWidth="1" />
                            <path d="M3.500 7h9v8h-9z" fill="#fcfcfc" stroke="none" />
                            <path d="M6.500 3v2M9.500 3v2" strokeWidth="1" />
                            <path d="M5 11h6" stroke="#2a2e32" strokeWidth="1" />
                        </Mono>
                    </TraySlot>
                    <TrayLang>us</TrayLang>
                    <TraySlot>
                        <Mono c="#fcfcfc">
                            <path d="M5 3h10v9H5M1 1h3v11H1zM9 12v2M6.500 14.500h5" strokeWidth="1" />
                            <path d="M2 3h1" strokeWidth="1" />
                        </Mono>
                    </TraySlot>
                    <TraySlot $w={26}>
                        <Mono s={14} c="#fcfcfc">
                            <path d="M2 11l6-6 6 6" strokeWidth="1.100" />
                        </Mono>
                    </TraySlot>
                    <Clock>
                        <ClockTime>6:33 AM</ClockTime>
                        <ClockDate>12/12/22</ClockDate>
                    </Clock>
                    <ShowDesktop />
                </Tray>
            </Panel>
            <Popup>
                <PopupItem>
                    <PtFlag w={15} h={15} soft />
                    Portuguese
                </PopupItem>
                <PopupItem>
                    <UsFlag w={16} h={16} soft />
                    English (US)
                </PopupItem>
                <PopupItem $active>
                    <SlidersIcon s={14} c="#31363b" />
                    Configure Keyboard Layout...
                    <PopupShortcut>Alt+D, S</PopupShortcut>
                </PopupItem>
            </Popup>
            <Cursor width={13} height={22} viewBox="0 0 13 22">
                <path d="M1 1v15l3.500-3 2.800 7 3-1.200-2.800-6.800H12z" fill="#3d4145" stroke="#eff0f1" strokeWidth="0.800" />
            </Cursor>
        </Screen>
    );
}
